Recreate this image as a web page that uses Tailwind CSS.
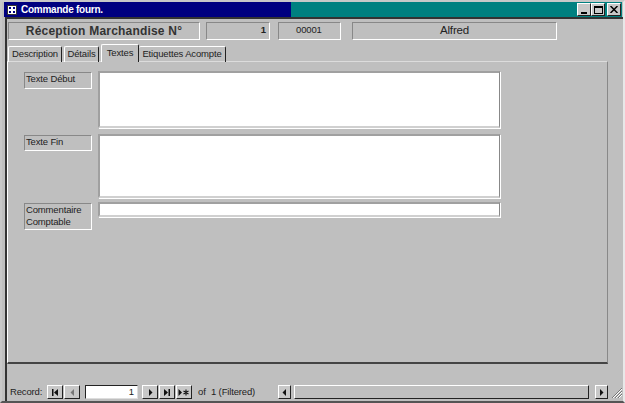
<!DOCTYPE html>
<html lang="fr">
<head>
  <meta charset="UTF-8" />
  <title>Commande fourn.</title>
  <script src="https://cdn.jsdelivr.net/npm/@tailwindcss/browser@4"></script>
</head>
<body class="bg-[#bfbfbf] font-['Liberation_Sans',sans-serif] text-[9.5px] tracking-[-0.15px] text-[#222] overflow-hidden">
  <div class="w-[625px] h-[403px] flex flex-col border-t-2 border-l-2 border-t-[#c8c8c8] border-l-[#c8c8c8] border-r-2 border-r-[#e8e8e8] border-b-2 border-b-[#555]">
    <!-- title bar -->
    <div class="ml-[2px] mr-[1px] h-[15px] flex items-center bg-[#008080] shrink-0">
      <div class="w-[287px] h-full bg-[#000080] flex items-center pl-[3px] gap-[4px] text-white font-bold text-[10px] tracking-[-0.25px]">
        <svg width="10" height="10" viewBox="0 0 10 10"><rect x="0.5" y="0.5" width="9" height="9" fill="#fff" stroke="#333"/><path d="M2 2h2v2H2zM6 2h2v2H6zM2 6h2v2H2zM6 6h2v2H6z" fill="#000080"/></svg>
        <span>Commande fourn.</span>
      </div>
      <div class="ml-auto flex pr-[1px]">
        <div class="w-[14px] h-[13px] bg-[#c8c8c8] border border-t-white border-l-white border-r-[#222] border-b-[#222] flex items-end justify-center pb-[1px]"><div class="w-[6px] h-[2px] bg-black"></div></div>
        <div class="w-[14px] h-[13px] bg-[#c8c8c8] border border-t-white border-l-white border-r-[#222] border-b-[#222] flex items-center justify-center"><div class="w-[9px] h-[8px] border border-t-2 border-black"></div></div>
        <div class="ml-[2px] w-[14px] h-[13px] bg-[#c8c8c8] border border-t-white border-l-white border-r-[#222] border-b-[#222] flex items-center justify-center">
          <svg width="8" height="7" viewBox="0 0 8 7"><path d="M0.5 0L7.5 7M7.5 0L0.5 7" stroke="#000" stroke-width="1.5"/></svg>
        </div>
      </div>
    </div>
    <div class="ml-[3px] flex-1 flex flex-col border-l-2 border-l-[#333] border-t-2 border-t-[#333] min-h-0">
      <!-- header -->
      <div class="flex h-[18px] mt-[3px] ml-[1px] shrink-0">
        <div class="w-[192px] border border-t-[#888] border-l-[#888] border-r-white border-b-white flex items-center justify-center font-bold text-[12px] tracking-[0.2px] text-[#333]">Réception Marchandise N°</div>
        <div class="ml-[6px] w-[64px] border border-t-[#888] border-l-[#888] border-r-white border-b-white flex items-center justify-end pr-[3px] pb-px font-bold">1</div>
        <div class="ml-[8px] w-[63px] border border-t-[#888] border-l-[#888] border-r-white border-b-white flex items-center pl-[17px] pb-px">00001</div>
        <div class="ml-[11px] w-[205px] border border-t-[#888] border-l-[#888] border-r-white border-b-white flex items-center justify-center text-[11.5px]">Alfred</div>
      </div>
      <!-- tabs -->
      <div class="flex items-end h-[18px] mt-[4px] ml-px shrink-0 relative z-10 -mb-px whitespace-nowrap">
        <div class="w-[54px] h-[16px] rounded-t-[2px] border-t border-l border-r border-t-white border-l-white border-r-[#222] flex items-center justify-center">Description</div>
        <div class="ml-[2px] w-[35px] h-[16px] rounded-t-[2px] border-t border-l border-r border-t-white border-l-white border-r-[#222] flex items-center justify-center">Détails</div>
        <div class="ml-[2px] w-[38px] h-[18px] bg-[#bfbfbf] rounded-t-[2px] border-t border-l border-r border-t-white border-l-white border-r-[#222] flex items-center justify-center pb-px">Textes</div>
        <div class="w-[87px] h-[16px] rounded-t-[2px] border-t border-r border-t-white border-r-[#222] flex items-center justify-center">Etiquettes Acompte</div>
      </div>
      <!-- tab panel -->
      <div class="w-[601px] h-[303px] shrink-0 border-t border-l border-r border-b-2 border-t-[#dcdcdc] border-l-white border-r-[#888] border-b-[#444] pl-[16px] pt-[9px]">
        <div class="flex h-[57px]">
          <div class="mt-px w-[68px] h-[17px] border border-t-[#888] border-l-[#888] border-r-white border-b-white pl-px leading-[11px]">Texte Début</div>
          <div class="ml-[6px] w-[402px] bg-white border-t-2 border-l-2 border-r border-b-2 border-t-[#a0a0a0] border-l-[#a0a0a0] border-r-[#888] border-b-[#d0d0d0] shadow-[1px_1px_0_#fff]"></div>
        </div>
        <div class="flex h-[64px] mt-[6px]">
          <div class="mt-px w-[68px] h-[16px] border border-t-[#888] border-l-[#888] border-r-white border-b-white pl-px leading-[11px]">Texte Fin</div>
          <div class="ml-[6px] w-[402px] bg-white border-t-2 border-l-2 border-r border-b-2 border-t-[#a0a0a0] border-l-[#a0a0a0] border-r-[#888] border-b-[#d0d0d0] shadow-[1px_1px_0_#fff]"></div>
        </div>
        <div class="flex mt-[4px]">
          <div class="mt-px w-[68px] h-[27px] border border-t-[#888] border-l-[#888] border-r-white border-b-white pl-px leading-[12px]">Commentaire Comptable</div>
          <div class="ml-[6px] w-[402px] h-[15px] bg-white border-t-2 border-l-2 border-r border-b-2 border-t-[#a0a0a0] border-l-[#a0a0a0] border-r-[#888] border-b-[#d0d0d0] shadow-[1px_1px_0_#fff]"></div>
        </div>
      </div>
      <!-- record bar -->
      <div class="flex items-center h-[14px] mt-[21px] ml-[3px] shrink-0">
        <span class="w-[37px]">Record:</span>
        <button class="w-[16px] h-[14px] bg-[#c8c8c8] border border-t-white border-l-white border-r-[#222] border-b-[#222] flex items-center justify-center">
          <svg width="8" height="7" viewBox="0 0 8 7"><path d="M1 0h1.5v7H1zM7 0v7L3 3.5z" fill="#111"/></svg>
        </button>
        <button class="ml-px w-[16px] h-[14px] bg-[#c8c8c8] border border-t-white border-l-white border-r-[#222] border-b-[#222] flex items-center justify-center">
          <svg width="5" height="7" viewBox="0 0 5 7"><path d="M4 0v7L0.5 3.5z" fill="#777"/></svg>
        </button>
        <div class="ml-[5px] w-[53px] h-[14px] bg-white border border-t-[#222] border-l-[#222] border-r-[#ddd] border-b-[#ddd] text-right pr-[3px] leading-[12px]">1</div>
        <button class="ml-[4px] w-[16px] h-[14px] bg-[#c8c8c8] border border-t-white border-l-white border-r-[#222] border-b-[#222] flex items-center justify-center">
          <svg width="5" height="7" viewBox="0 0 5 7"><path d="M1 0v7L4.5 3.5z" fill="#111"/></svg>
        </button>
        <button class="ml-px w-[16px] h-[14px] bg-[#c8c8c8] border border-t-white border-l-white border-r-[#222] border-b-[#222] flex items-center justify-center">
          <svg width="8" height="7" viewBox="0 0 8 7"><path d="M1 0v7L5 3.5zM5.5 0H7v7H5.5z" fill="#111"/></svg>
        </button>
        <button class="ml-px w-[16px] h-[14px] bg-[#c8c8c8] border border-t-white border-l-white border-r-[#222] border-b-[#222] flex items-center justify-center">
          <svg width="12" height="7" viewBox="0 0 12 7"><path d="M0.5 0v7L4 3.5z" fill="#111"/><path d="M8 0.5v6M5.5 2l5 3M10.5 2l-5 3" stroke="#111" stroke-width="1.1"/></svg>
        </button>
        <span class="ml-[6px] w-[13px]">of</span>
        <span class="whitespace-nowrap w-[46px] shrink-0">1 (Filtered)</span>
        <!-- scrollbar -->
        <button class="ml-[21px] w-[13px] h-[14px] bg-[#c8c8c8] border border-t-white border-l-white border-r-[#222] border-b-[#222] flex items-center justify-center shrink-0">
          <svg width="5" height="7" viewBox="0 0 5 7"><path d="M4 0v7L0.5 3.5z" fill="#111"/></svg>
        </button>
        <div class="ml-[3px] w-[295px] h-[14px] border-t border-t-white border-b border-b-[#222] border-l border-l-white border-r border-r-[#222] shrink-0"></div>
        <button class="ml-[6px] w-[13px] h-[14px] bg-[#c8c8c8] border border-t-white border-l-white border-r-[#222] border-b-[#222] flex items-center justify-center shrink-0">
          <svg width="5" height="7" viewBox="0 0 5 7"><path d="M1 0v7L4.5 3.5z" fill="#111"/></svg>
        </button>
        <svg class="ml-[3px] shrink-0" width="11" height="11" viewBox="0 0 11 11"><path d="M1 11L11 1M4 11L11 4M7 11L11 7" stroke="#777" stroke-width="1"/><path d="M2 11L11 2M5 11L11 5M8 11L11 8" stroke="#fff" stroke-width="1"/></svg>
      </div>
    </div>
  </div>
</body>
</html>
